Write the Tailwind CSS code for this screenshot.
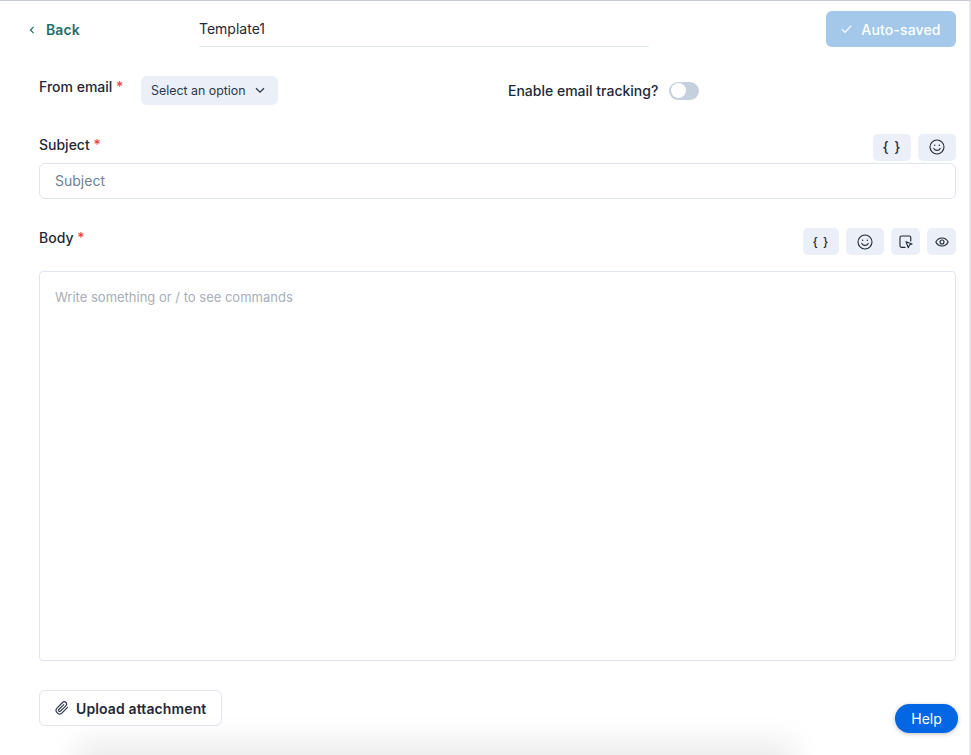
<!DOCTYPE html>
<html>
<head>
<meta charset="utf-8">
<script src="https://cdn.jsdelivr.net/npm/@tailwindcss/browser@4"></script>
</head>
<body class="bg-white">
<div class="relative h-[755px] w-[971px] overflow-hidden border-t border-r-2 border-t-[#c3c8da] border-r-[#e8e8ea] font-['Inter',sans-serif] text-[#1f2937]">
  <header class="flex h-[46px] items-start pl-[29px] pr-[13px] pt-[10px]">
    <a class="flex w-[170px] items-center gap-[11px] pt-[9px] text-[14px] leading-[20px] font-semibold tracking-[0.1px] text-[#1f6f6b]">
      <svg class="h-[8px] w-[6px]" viewBox="0 0 6 8" fill="none" stroke="currentColor" stroke-width="1.2"><path d="M4.6 .8 1.4 4l3.2 3.2"/></svg>
      Back
    </a>
    <div class="h-[36px] w-[450px] border-b border-[#e2e8f0] pt-[8px] text-[14px] leading-[20px] text-[#1f2937]">Template1</div>
    <div class="flex-1"></div>
    <button class="flex h-[36px] w-[130px] items-center justify-center gap-[9px] rounded-[6px] bg-[#a3c8ea] text-[14px] font-medium tracking-[0.15px] text-white">
      <svg class="h-[10px] w-[11px]" viewBox="0 0 11 10" fill="none" stroke="white" stroke-width="1.2"><path d="M.8 5.2 4 8.4l6.2-6.8"/></svg>
      Auto-saved
    </button>
  </header>

  <main class="pl-[39px] pr-[13px]">
    <div class="mt-[29px] flex h-[29px] items-start">
      <label class="w-[102px] pt-[1px] text-[14px] leading-[20px] font-medium">From email <span class="text-[#ef4444]">*</span></label>
      <button class="flex h-[29px] w-[137px] items-center gap-[9px] rounded-[6px] bg-[#ebeff7] pl-[10px] pt-[2px] text-[12.4px] text-[#2d3748]">
        Select an option
        <svg class="-mt-[2px] h-[7px] w-[10px]" viewBox="0 0 10 7" fill="none" stroke="currentColor" stroke-width="1.3"><path d="m1 1.2 4 4 4-4"/></svg>
      </button>
      <div class="ml-[230px] flex h-[29px] items-center gap-[11px]">
        <span class="text-[14px] font-medium">Enable email tracking?</span>
        <span class="relative h-[18px] w-[30px] rounded-full bg-[#c4d0de]">
          <span class="absolute left-[1.5px] top-[1.5px] h-[15px] w-[15px] rounded-full bg-white"></span>
        </span>
      </div>
    </div>

    <div class="mt-[29px] flex h-[29px] items-start justify-between">
      <label class="pt-[1px] text-[14px] leading-[20px] font-medium">Subject <span class="text-[#ef4444]">*</span></label>
      <div class="flex gap-[7px]">
        <span class="flex h-[27px] w-[38px] items-center justify-center rounded-[5px] bg-[#ebeff7] pb-[2px] text-[14px] font-medium tracking-[1px]">{ }</span>
        <span class="flex h-[27px] w-[38px] items-center justify-center rounded-[5px] bg-[#ebeff7] pb-[2px]">
          <svg class="h-[16px] w-[16px]" viewBox="0 0 16 16" fill="none" stroke="#1f2937" stroke-width="1.1"><circle cx="8" cy="8" r="7"/><path d="M4.8 9.4c.7 1.4 1.9 2 3.2 2s2.5-.6 3.2-2" stroke-linecap="round"/><circle cx="5.7" cy="6.2" r=".7" fill="#1f2937" stroke="none"/><circle cx="10.3" cy="6.2" r=".7" fill="#1f2937" stroke="none"/></svg>
        </span>
      </div>
    </div>
    <div class="flex h-[36px] items-center rounded-[6px] border border-[#dfe5ee] pb-[2px] pl-[15px] text-[14px] text-[#718096]">Subject</div>

    <div class="mt-[29px] flex h-[43px] items-start justify-between">
      <label class="text-[14px] leading-[20px] font-medium">Body <span class="text-[#ef4444]">*</span></label>
      <div class="flex gap-[7px]">
        <span class="flex h-[27px] w-[36px] items-center justify-center rounded-[5px] bg-[#ebeff7] text-[12px] font-medium tracking-[1px]">{ }</span>
        <span class="flex h-[27px] w-[38px] items-center justify-center rounded-[5px] bg-[#ebeff7]">
          <svg class="h-[16px] w-[16px]" viewBox="0 0 16 16" fill="none" stroke="#1f2937" stroke-width="1.1"><circle cx="8" cy="8" r="7"/><path d="M4.8 9.4c.7 1.4 1.9 2 3.2 2s2.5-.6 3.2-2" stroke-linecap="round"/><circle cx="5.7" cy="6.2" r=".7" fill="#1f2937" stroke="none"/><circle cx="10.3" cy="6.2" r=".7" fill="#1f2937" stroke="none"/></svg>
        </span>
        <span class="flex h-[27px] w-[29px] items-center justify-center rounded-[5px] bg-[#ebeff7]">
          <svg class="h-[14px] w-[14px]" viewBox="0 0 14 14" fill="none" stroke="#1f2937" stroke-width="1.1"><path d="M6 12.4H2.6a1.6 1.6 0 0 1-1.6-1.6V2.6A1.6 1.6 0 0 1 2.6 1h7.6a1.6 1.6 0 0 1 1.6 1.6V6" stroke-linecap="round"/><path d="M7 6.8l6 2.2-2.6 1.1-1.1 2.6z" stroke-linejoin="round"/></svg>
        </span>
        <span class="flex h-[27px] w-[29px] items-center justify-center rounded-[5px] bg-[#ebeff7]">
          <svg class="h-[10px] w-[14px]" viewBox="0 0 14 10" fill="none" stroke="#1f2937" stroke-width="1.1"><path d="M.8 5C2.2 2.3 4.4 1 7 1s4.8 1.3 6.2 4C11.8 7.7 9.6 9 7 9S2.2 7.7.8 5z"/><circle cx="7" cy="5" r="2"/></svg>
        </span>
      </div>
    </div>
    <div class="h-[390px] rounded-[4px] border border-[#dfe5ee] pl-[15px] pt-[15px] text-[13px] leading-[20px] text-[#a8aeb9]">Write something or / to see commands</div>

    <button class="mt-[29px] flex h-[36px] w-[183px] items-center gap-[7px] rounded-[6px] border border-[#dfe5ee] bg-white pl-[15px] text-[14px] font-semibold tracking-[0.12px]">
      <svg class="h-[14px] w-[14px]" viewBox="0 0 24 24" fill="none" stroke="#2d3748" stroke-width="2" stroke-linecap="round" stroke-linejoin="round"><path d="M21.44 11.05l-9.19 9.19a6 6 0 0 1-8.49-8.49l9.19-9.19a4 4 0 0 1 5.66 5.66l-9.2 9.19a2 2 0 0 1-2.83-2.83l8.49-8.48"/></svg>
      Upload attachment
    </button>
  </main>

  <div class="absolute bottom-[-50px] left-[90px] h-[50px] w-[690px] shadow-[0_0_30px_14px_rgba(0,0,0,0.08)]"></div>
  <button class="absolute left-[895px] top-[703px] h-[29px] w-[63px] rounded-full bg-[#0366e3] text-[14px] text-white shadow-[0_1px_4px_rgba(0,0,0,0.25)]">Help</button>
</div>
</body>
</html>
